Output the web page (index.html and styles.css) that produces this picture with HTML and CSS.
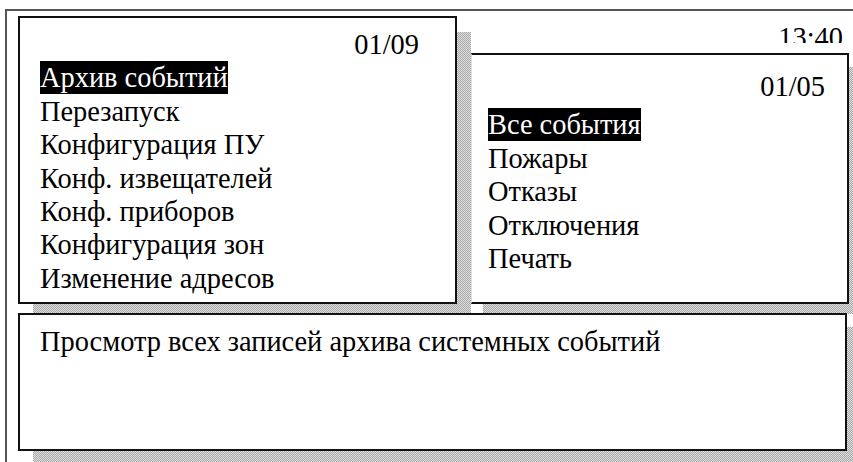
FILE: index.html
```html
<!DOCTYPE html>
<html lang="ru">
<head>
<meta charset="utf-8">
<title>Архив событий</title>
<link rel="stylesheet" href="styles.css">
</head>
<body>
<div class="screen">
  <div class="top-row">
    <section class="panel panel-menu">
      <div class="counter">01/09</div>
      <ul class="menu">
        <li><span class="selected">Архив событий</span></li>
        <li>Перезапуск</li>
        <li>Конфигурация ПУ</li>
        <li>Конф. извещателей</li>
        <li>Конф. приборов</li>
        <li>Конфигурация зон</li>
        <li>Изменение адресов</li>
      </ul>
    </section>
    <div class="side">
      <div class="clock">13:40</div>
      <section class="panel panel-sub">
        <div class="counter">01/05</div>
        <ul class="menu submenu">
          <li><span class="selected">Все события</span></li>
          <li>Пожары</li>
          <li>Отказы</li>
          <li>Отключения</li>
          <li>Печать</li>
        </ul>
      </section>
    </div>
  </div>
  <section class="panel panel-hint">
    <p class="hint">Просмотр всех записей архива системных событий</p>
  </section>
</div>
</body>
</html>
```
FILE: styles.css
```css
html {
  background: #fff;
}

body {
  margin: 0;
  padding: 0;
  font-family: "Liberation Serif", "Times New Roman", serif;
  font-size: 28.4px;
  line-height: 33.4px;
  color: #000;
  overflow: hidden;
}

/* outer display frame: only the top and left edges fall inside the view */
.screen {
  position: relative;
  z-index: 0;
  margin: 9px 0 0 5px;
  height: 460px;
  border-left: 2px solid #555;
  border-top: 2px solid #555;
}

.top-row {
  display: flex;
  align-items: flex-start;
}

.panel {
  position: relative;
  box-sizing: border-box;
  background: #fff;
  border: 2px solid #111;
}

/* dithered drop shadow behind each window */
.panel::before {
  content: "";
  position: absolute;
  z-index: -1;
  background: repeating-conic-gradient(#a9a9a9 0 25%, #dedede 0 50%) 0 0 / 2px 2px;
}

.panel-menu {
  margin: 5px 0 0 11px;
  width: 439px;
  height: 288px;
  padding: 10px 36px 0 20px;
}

.panel-menu::before {
  left: 13px;
  top: 14px;
  right: -16px;
  bottom: -12px;
}

.side {
  margin-left: 14px;
  width: 378px;
  display: flex;
  flex-direction: column;
}

.clock {
  box-sizing: border-box;
  height: 32px;
  padding: 10px 6px 0 0;
  margin-bottom: 10px;
  text-align: right;
  overflow: hidden;
}

.panel-sub {
  height: 251px;
  border-left: 1px solid #ddd;
  padding: 15px 22px 0 16px;
}

.panel-sub::before {
  left: 11px;
  top: 12px;
  right: -16px;
  bottom: -12px;
}

.counter {
  text-align: right;
}

.menu {
  list-style: none;
  margin: 0;
  padding: 0;
  white-space: nowrap;
}

.submenu {
  margin-top: 5px;
}

.selected {
  background: #000;
  color: #fff;
  padding: 1px 0;
}

.panel-hint {
  margin: 9px 0 0 11px;
  width: 829px;
  height: 138px;
  padding: 10px 20px 0 20px;
}

.panel-hint::before {
  left: 13px;
  top: 12px;
  right: -16px;
  bottom: -13px;
}

.hint {
  margin: 0;
}
```
